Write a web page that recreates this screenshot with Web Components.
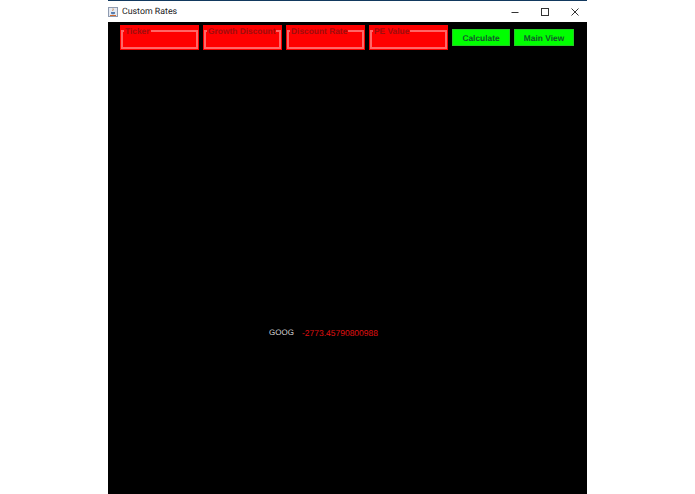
<!DOCTYPE html>
<html>
<head>
<meta charset="utf-8">
<title>Custom Rates</title>
<style>
  html, body { margin: 0; height: 100%; background: #fff; overflow: hidden; }
  body { display: flex; padding-left: 108px; font-family: "Liberation Sans", Arial, sans-serif; text-rendering: geometricPrecision; }
</style>
</head>
<body>
<app-window title="Custom Rates">
  <rate-field label="Ticker"></rate-field>
  <rate-field label="Growth Discount"></rate-field>
  <rate-field label="Discount Rate"></rate-field>
  <rate-field label="PE Value"></rate-field>
  <green-button style="width:58px">Calculate</green-button>
  <green-button style="width:60px">Main View</green-button>
  <rate-result slot="result" ticker="GOOG" value="-2773.45790800988"></rate-result>
</app-window>
<script>
(function() {
    let windowTmpl = document.createElement("template");
    windowTmpl.innerHTML = `
    <style>
      :host { display: flex; flex-direction: column; width: 479px; height: 494px; }
      .title { display: flex; align-items: center; height: 21px; background: #fff; border-top: 1px solid #12395f; }
      .icon { width: 10px; height: 10px; }
      .name { margin-left: 4px; font: 8.8px Roboto, "Liberation Sans", sans-serif; color: #222; }
      .controls { margin-left: auto; display: flex; margin-right: -3px; }
      .controls span { width: 30px; height: 21px; display: flex; align-items: center; justify-content: center; }
      .content { flex: 1; background: #000; display: flex; flex-direction: column; }
      .bar { display: flex; gap: 4px; align-items: center; padding: 3px 0 0 12px; }
      .results { padding-top: 278px; padding-left: 161px; }
    </style>
    <div class="title">
      <svg class="icon" viewBox="0 0 10 10">
        <rect x="0.5" y="0.5" width="9" height="9" fill="#e4e9f2" stroke="#8f9bb0"/>
        <path d="M5 1.5c1 1-1 1.5 0 2.5" fill="none" stroke="#c9803f"/>
        <path d="M3 5h4v1.5c0 1-4 1-4 0z" fill="#5a7fb0"/>
        <path d="M2 8.5h6" stroke="#d06a30"/>
      </svg>
      <span class="name"></span>
      <div class="controls">
        <span><svg width="10" height="10" viewBox="0 0 10 10"><path d="M1.5 5.5h7" stroke="#333"/></svg></span>
        <span><svg width="10" height="10" viewBox="0 0 10 10"><rect x="1.5" y="1.5" width="7" height="7" fill="none" stroke="#333"/></svg></span>
        <span><svg width="10" height="10" viewBox="0 0 10 10"><path d="M1.5 1.5l7 7M8.5 1.5l-7 7" stroke="#333"/></svg></span>
      </div>
    </div>
    <div class="content">
      <div class="bar"><slot></slot></div>
      <div class="results"><slot name="result"></slot></div>
    </div>
    `;

    class AppWindow extends HTMLElement {
        constructor() {
            super();
            this._shadowRoot = this.attachShadow({mode: "open"});
            this._shadowRoot.appendChild(windowTmpl.content.cloneNode(true));
            this._shadowRoot.querySelector(".name").textContent = this.getAttribute("title");
        }
    }

    let fieldTmpl = document.createElement("template");
    fieldTmpl.innerHTML = `
    <style>
      :host { display: block; width: 79px; height: 25px; background: #ff0000; box-sizing: border-box; padding: 3px 1px 1px 1px; }
      fieldset { margin: 0; padding: 0; box-sizing: border-box; width: 100%; height: 100%; border: 2px solid #ff6666; min-width: 0; }
      legend { padding: 0 1px; margin-left: 1px; font: bold 8.4px "Liberation Sans", Arial, sans-serif; color: #a00e0e; line-height: 6px; white-space: nowrap; }
    </style>
    <fieldset><legend></legend></fieldset>
    `;

    class RateField extends HTMLElement {
        constructor() {
            super();
            this._shadowRoot = this.attachShadow({mode: "open"});
            this._shadowRoot.appendChild(fieldTmpl.content.cloneNode(true));
            this._shadowRoot.querySelector("legend").textContent = this.getAttribute("label");
        }
    }

    let buttonTmpl = document.createElement("template");
    buttonTmpl.innerHTML = `
    <style>
      :host { display: block; height: 17px; }
      button { display: block; width: 100%; height: 17px; padding: 0; background: #00ff00; border: 1px solid #22cc22; font: bold 8.4px "Liberation Sans", Arial, sans-serif; color: #14582c; text-rendering: geometricPrecision; }
    </style>
    <button><slot></slot></button>
    `;

    class GreenButton extends HTMLElement {
        constructor() {
            super();
            this._shadowRoot = this.attachShadow({mode: "open"});
            this._shadowRoot.appendChild(buttonTmpl.content.cloneNode(true));
        }
    }

    let resultTmpl = document.createElement("template");
    resultTmpl.innerHTML = `
    <style>
      :host { display: flex; gap: 8px; font: 8px "Liberation Sans", Arial, sans-serif; line-height: 10px; }
      .ticker { color: #d8d8d8; }
      .value { color: #e01010; font-size: 8.5px; }
    </style>
    <span class="ticker"></span><span class="value"></span>
    `;

    class RateResult extends HTMLElement {
        constructor() {
            super();
            this._shadowRoot = this.attachShadow({mode: "open"});
            this._shadowRoot.appendChild(resultTmpl.content.cloneNode(true));
            this._shadowRoot.querySelector(".ticker").textContent = this.getAttribute("ticker");
            this._shadowRoot.querySelector(".value").textContent = this.getAttribute("value");
        }
    }

    customElements.define("app-window", AppWindow);
    customElements.define("rate-field", RateField);
    customElements.define("green-button", GreenButton);
    customElements.define("rate-result", RateResult);
})();
</script>
</body>
</html>
